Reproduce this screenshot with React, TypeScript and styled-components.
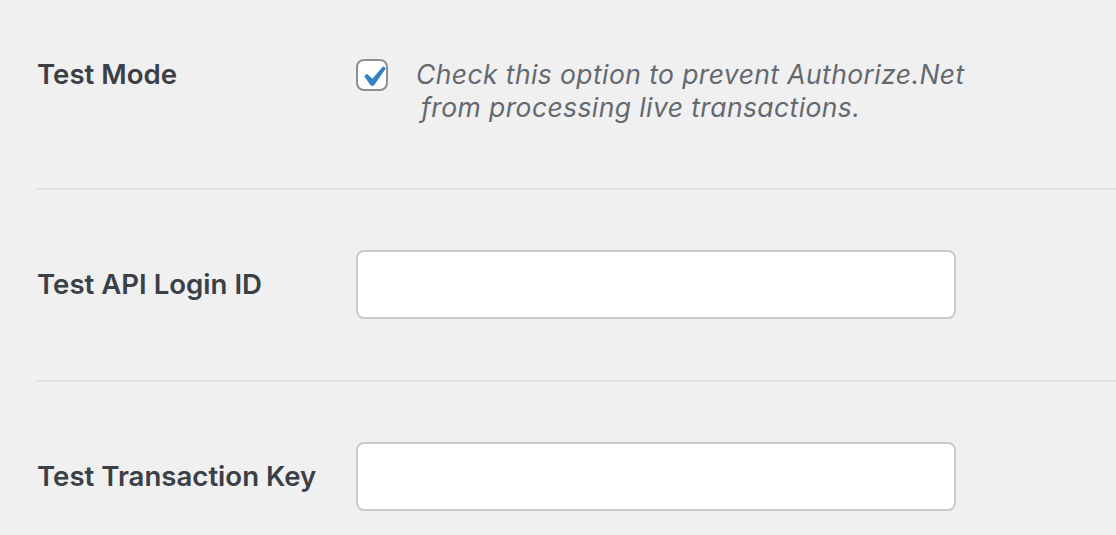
import React from "react";
import styled, { createGlobalStyle } from "styled-components";

const Global = createGlobalStyle`
  html, body { margin: 0; padding: 0; background: #f0f0f1; }
  body { font-family: Inter, "Noto Sans", sans-serif; -webkit-font-smoothing: antialiased; }
`;

const Page = styled.div`
  padding-left: 36px;
  width: 1080px;
  overflow: hidden;
`;

const Row = styled.div<{ $align: "start" | "center"; $pt: number; $pb: number }>`
  display: grid;
  grid-template-columns: 320px 1fr;
  align-items: ${(p) => p.$align};
  padding: ${(p) => p.$pt}px 0 ${(p) => p.$pb}px;
  border-bottom: ${(p) => (p.$pb ? "2px solid #e2e2e3" : "none")};
`;

const Label = styled.div`
  font-size: 27.6px;
  font-weight: 600;
  line-height: 33px;
  color: #3a4046;
  padding-left: 1px;
`;

const Field = styled.div`
  display: flex;
  align-items: flex-start;
  gap: 28px;
`;

const Box = styled.span`
  position: relative;
  flex: none;
  width: 32px;
  height: 32px;
  margin-top: 1px;
  box-sizing: border-box;
  border: 2px solid #8c8f94;
  border-radius: 8px;
  background: #fff;
`;

const Check = styled.svg`
  position: absolute;
  left: -6px;
  top: -5px;
  width: 42px;
  height: 42px;
`;

const Description = styled.p`
  margin: 0;
  font-size: 26.5px;
  letter-spacing: 0.4px;
  font-style: italic;
  line-height: 33px;
  color: #646970;
`;

const Second = styled.span`
  display: block;
  padding-left: 5px;
`;

const TextInput = styled.input`
  box-sizing: border-box;
  width: 600px;
  height: 69px;
  border: 2px solid #cacacb;
  border-radius: 8px;
  background: #fff;
  outline: none;
  font-size: 26px;
  padding: 0 16px;
`;

export default function App() {
  return (
    <>
      <Global />
      <Page>
        <Row $align="start" $pt={58} $pb={64}>
          <Label>Test Mode</Label>
          <Field>
            <Box>
              <Check viewBox="0 0 20 20">
                <path
                  d="M14.83 4.89l1.34.94-5.81 8.38H9.02L5.78 9.67l1.34-1.25 2.57 2.4z"
                  fill="#3582c4"
                />
              </Check>
            </Box>
            <Description>
              Check this option to prevent Authorize.Net
              <Second>from processing live transactions.</Second>
            </Description>
          </Field>
        </Row>
        <Row $align="center" $pt={60} $pb={61}>
          <Label>Test API Login ID</Label>
          <TextInput type="text" />
        </Row>
        <Row $align="center" $pt={60} $pb={0}>
          <Label>Test Transaction Key</Label>
          <TextInput type="text" />
        </Row>
      </Page>
    </>
  );
}
